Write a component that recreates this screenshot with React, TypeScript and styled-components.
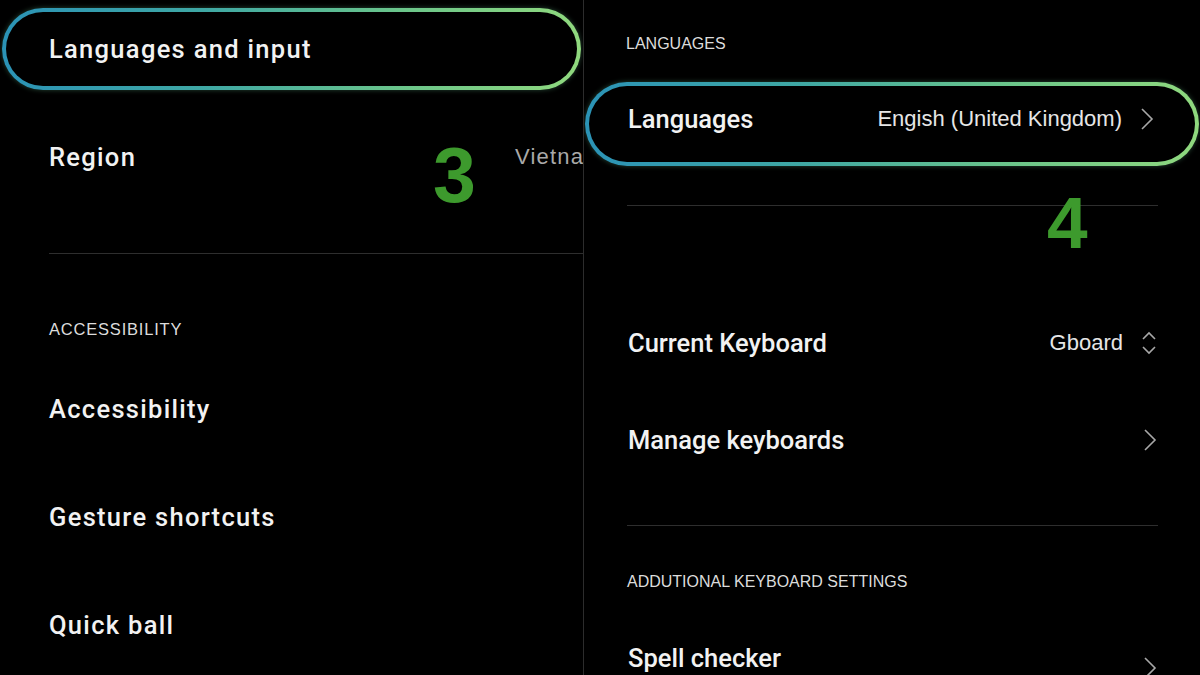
import styled, { createGlobalStyle } from 'styled-components';

const GlobalStyle = createGlobalStyle`
  html, body {
    margin: 0;
    padding: 0;
    background: #000;
  }
  body {
    width: 1200px;
    height: 675px;
    overflow: hidden;
    font-family: Roboto, "Liberation Sans", sans-serif;
  }
`;

const Chevron = () => (
  <svg width="16" height="24" viewBox="0 0 16 24" fill="none">
    <polyline points="3,2 13,12 3,22" stroke="#a8a8a8" strokeWidth="1.6" />
  </svg>
);

const UpDown = () => (
  <svg width="18" height="26" viewBox="0 0 18 26" fill="none">
    <polyline points="3,9 9,3 15,9" stroke="#a8a8a8" strokeWidth="1.6" />
    <polyline points="3,17 9,23 15,17" stroke="#a8a8a8" strokeWidth="1.6" />
  </svg>
);

export default function App() {
  return (
    <>
      <GlobalStyle />
      <SScreen>
        <SLeft>
          <SPill $inset={2} $width={579} $height={82} $padLeft={43} $top={8} $lift={0}>
            <STitle $wide>Languages and input</STitle>
          </SPill>
          <SRow $height={134} $padLeft={49}>
            <STitle $wide>Region</STitle>
            <SValue $left={515}>Vietnam</SValue>
          </SRow>
          <SDivider $top={29} $left={49} $right={0} />
          <SLabel $top={65} $left={49} $wide>ACCESSIBILITY</SLabel>
          <SList $top={16}>
            <SRow $height={108} $padLeft={49}>
              <STitle $wide>Accessibility</STitle>
            </SRow>
            <SRow $height={108} $padLeft={49}>
              <STitle $wide>Gesture shortcuts</STitle>
            </SRow>
            <SRow $height={108} $padLeft={49}>
              <STitle $wide>Quick ball</STitle>
            </SRow>
          </SList>
          <SStep $left={433} $top={137} $size={77}>3</SStep>
        </SLeft>

        <SRight>
          <SLabel $top={34} $left={42}>LANGUAGES</SLabel>
          <SPill $inset={1} $width={614} $height={84} $padLeft={39} $top={28} $lift={10}>
            <STitle>Languages</STitle>
            <SAside>
              <SSub>Engish (United Kingdom)</SSub>
              <Chevron />
            </SAside>
          </SPill>
          <SDivider $top={39} $left={43} $right={42} />
          <SList $top={88}>
            <SRow $height={97} $padLeft={44} $padRight={42}>
              <STitle>Current Keyboard</STitle>
              <SAside>
                <SSub>Gboard</SSub>
                <UpDown />
              </SAside>
            </SRow>
            <SRow $height={97} $padLeft={44} $padRight={42}>
              <STitle>Manage keyboards</STitle>
              <SAside>
                <Chevron />
              </SAside>
            </SRow>
          </SList>
          <SDivider $top={37} $left={43} $right={42} />
          <SLabel $top={46} $left={43}>ADDUTIONAL KEYBOARD SETTINGS</SLabel>
          <SRow $height={132} $padLeft={44} $padRight={42}>
            <STitle>Spell checker</STitle>
            <SAside $shift={10}>
              <Chevron />
            </SAside>
          </SRow>
          <SStep $left={463} $top={186} $size={73}>4</SStep>
        </SRight>
      </SScreen>
    </>
  );
}

const SScreen = styled.div`
  display: flex;
  width: 1200px;
  height: 675px;
  background: #000;
  overflow: hidden;
`;

const SPanel = styled.div`
  position: relative;
  display: flex;
  flex-direction: column;
  height: 675px;
  overflow: hidden;
`;

const SLeft = styled(SPanel)`
  width: 583px;
  border-right: 1px solid #2c2c2c;
`;

const SRight = styled(SPanel)`
  flex: 1;
`;

const SPill = styled.div<{
  $inset: number;
  $width: number;
  $height: number;
  $padLeft: number;
  $top: number;
  $lift: number;
}>`
  display: flex;
  align-items: center;
  justify-content: space-between;
  box-sizing: border-box;
  margin-top: ${(p) => p.$top}px;
  margin-left: ${(p) => p.$inset}px;
  width: ${(p) => p.$width}px;
  height: ${(p) => p.$height}px;
  padding: 0 40px ${(p) => p.$lift}px ${(p) => p.$padLeft}px;
  border: 4px solid transparent;
  border-radius: 999px;
  background:
    linear-gradient(#000, #000) padding-box,
    linear-gradient(90deg, #2b93b6 0%, #3fa8a4 35%, #6cc68a 70%, #90d97e 100%) border-box;
  box-shadow: 0 0 5px rgba(110, 200, 150, 0.35);
  flex-shrink: 0;
`;

const SRow = styled.div<{ $height: number; $padLeft: number; $padRight?: number }>`
  position: relative;
  display: flex;
  align-items: center;
  justify-content: space-between;
  box-sizing: border-box;
  height: ${(p) => p.$height}px;
  padding: 0 ${(p) => p.$padRight ?? 0}px 0 ${(p) => p.$padLeft}px;
  flex-shrink: 0;
`;

const SList = styled.div<{ $top: number }>`
  display: flex;
  flex-direction: column;
  margin-top: ${(p) => p.$top}px;
`;

const STitle = styled.span<{ $wide?: boolean }>`
  font-family: Roboto, "Liberation Sans", sans-serif;
  font-weight: 500;
  font-size: 25.5px;
  letter-spacing: ${(p) => (p.$wide ? '1.3px' : '0')};
  color: #f2f2f2;
  white-space: nowrap;
`;

const SAside = styled.div<{ $shift?: number }>`
  display: flex;
  align-items: center;
  gap: 17px;
  transform: translateY(${(p) => p.$shift ?? 0}px);
`;

const SSub = styled.span`
  font-family: "Liberation Sans", Arial, sans-serif;
  font-size: 22px;
  color: #e6e6e6;
  white-space: nowrap;
`;

const SValue = styled.span<{ $left: number }>`
  position: absolute;
  left: ${(p) => p.$left}px;
  font-family: "Liberation Sans", Arial, sans-serif;
  font-size: 22px;
  letter-spacing: 1.2px;
  color: #a9a9a9;
  white-space: nowrap;
`;

const SDivider = styled.div<{ $top: number; $left: number; $right: number }>`
  height: 1px;
  margin: ${(p) => p.$top}px ${(p) => p.$right}px 0 ${(p) => p.$left}px;
  background: #2e2e2e;
  flex-shrink: 0;
`;

const SLabel = styled.div<{ $top: number; $left: number; $wide?: boolean }>`
  margin: ${(p) => p.$top}px 0 0 ${(p) => p.$left}px;
  height: 20px;
  line-height: 20px;
  font-family: "Liberation Sans", Arial, sans-serif;
  font-size: ${(p) => (p.$wide ? '16.5px' : '16px')};
  letter-spacing: ${(p) => (p.$wide ? '0.8px' : '0')};
  color: #dcdcdc;
  flex-shrink: 0;
`;

const SStep = styled.div<{ $left: number; $top: number; $size: number }>`
  position: absolute;
  left: ${(p) => p.$left}px;
  top: ${(p) => p.$top}px;
  font-family: "Liberation Sans", Arial, sans-serif;
  font-weight: 700;
  font-size: ${(p) => p.$size}px;
  line-height: 1;
  color: #3d9a2d;
`;
